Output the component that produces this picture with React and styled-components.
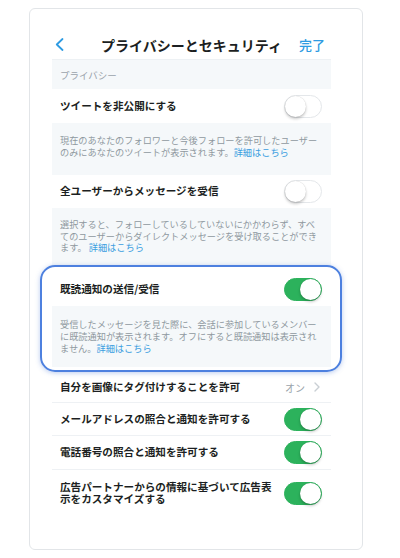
import React from "react";
import styled, { createGlobalStyle } from "styled-components";

const Global = createGlobalStyle`
  html, body { margin: 0; padding: 0; background: #ffffff; }
  body { font-family: "Noto Sans CJK JP", "Noto Sans", sans-serif; }
  * { box-sizing: border-box; }
`;

const Card = styled.div`
  margin: 8px 0 0 29px;
  width: 334px;
  height: 542px;
  border: 1px solid #e2e5e8;
  border-radius: 6px;
  padding: 21px 31px 0 22px;
  background: #fff;
`;

const Header = styled.div`
  display: grid;
  grid-template-columns: 40px 1fr 40px;
  align-items: center;
  height: 29px;
`;

const Back = styled.button`
  border: 0;
  background: none;
  padding: 0 0 0 3px;
  display: flex;
  align-items: center;
  height: 14px;
`;

const Title = styled.div`
  text-align: center;
  font-size: 14px;
  font-weight: 700;
  color: #1c1f22;
  letter-spacing: 0;
`;

const Done = styled.div`
  text-align: right;
  padding-right: 6px;
  font-size: 13px;
  font-weight: 500;
  color: #2d9be2;
`;

const SectionHead = styled.div`
  height: 30px;
  background: #f5f8fa;
  display: flex;
  align-items: center;
  padding-left: 8px;
  font-size: 9.5px;
  color: #9aa3ab;
  border-top: 1px solid #edf1f4;
`;

const Row = styled.div`
  display: flex;
  align-items: center;
  justify-content: space-between;
  height: ${(p) => p.$h}px;
  padding: ${(p) => p.$pt || 0}px 9px 0 8px;
  background: #fff;
  border-bottom: ${(p) => (p.$line ? "1px solid #eef1f4" : "0")};
`;

const Label = styled.div`
  font-size: 10.6px;
  font-weight: 700;
  color: #1c1f22;
  line-height: 12.5px;
`;

const Desc = styled.div`
  background: #f5f8fa;
  padding: ${(p) => p.$pt}px 8px ${(p) => p.$pb}px 8px;
  font-size: 9.2px;
  line-height: ${(p) => p.$lh}px;
  color: #8f989f;
  white-space: nowrap;
`;

const Link = styled.span`
  color: #3a9de0;
`;

const Group = styled.div`
  position: relative;
  margin-bottom: 5px;
  &::after {
    content: "";
    position: absolute;
    top: -1px;
    bottom: -5px;
    left: -12px;
    right: -11px;
    border: 2.5px solid #4d80df;
    border-radius: 15px;
    box-shadow: 0 1px 5px rgba(60, 110, 210, 0.35);
    pointer-events: none;
  }
`;

const Toggle = styled.span`
  position: relative;
  flex: none;
  width: 38px;
  height: 23px;
  border-radius: 12px;
  background: ${(p) => (p.$on ? "#2cb25c" : "#ffffff")};
  border: 1px solid ${(p) => (p.$on ? "#2cb25c" : "#e4e7ea")};
`;

const Knob = styled.span`
  position: absolute;
  top: 0;
  left: ${(p) => (p.$on ? "15px" : "0")};
  width: 21px;
  height: 21px;
  border-radius: 50%;
  background: #fff;
  box-shadow: 0 2px 3px rgba(0, 0, 0, 0.22), 0 0 1px rgba(0, 0, 0, 0.2);
`;

const Value = styled.div`
  display: flex;
  align-items: center;
  gap: 9px;
  font-size: 10px;
  color: #9aa3ab;
  padding-right: 2px;
`;

const Switch = ({ on }) => (
  <Toggle $on={on}>
    <Knob $on={on} />
  </Toggle>
);

export default function App() {
  return (
    <>
      <Global />
      <Card>
        <Header>
          <Back aria-label="戻る">
            <svg width="9" height="13" viewBox="0 0 9 13">
              <polyline points="7.5,1 1.8,6.5 7.5,12" fill="none" stroke="#2d9be2" strokeWidth="1.8" strokeLinecap="round" strokeLinejoin="round" />
            </svg>
          </Back>
          <Title>プライバシーとセキュリティ</Title>
          <Done>完了</Done>
        </Header>

        <SectionHead>プライバシー</SectionHead>

        <Row $h={34}>
          <Label>ツイートを非公開にする</Label>
          <Switch on={false} />
        </Row>
        <Desc $pt={11} $pb={17} $lh={12}>
          現在のあなたのフォロワーと今後フォローを許可したユーザー
          <br />
          のみにあなたのツイートが表示されます。<Link>詳細はこちら</Link>
        </Desc>

        <Row $h={33}>
          <Label>全ユーザーからメッセージを受信</Label>
          <Switch on={false} />
        </Row>
        <Desc $pt={11} $pb={12} $lh={11.7}>
          選択すると、フォローしているしていないにかかわらず、すべ
          <br />
          てのユーザーからダイレクトメッセージを受け取ることができ
          <br />
          ます。 <Link>詳細はこちら</Link>
        </Desc>

        <Group>
          <Row $h={40} $pt={6}>
            <Label>既読通知の送信/受信</Label>
            <Switch on />
          </Row>
          <Desc $pt={13} $pb={13} $lh={11.7}>
            受信したメッセージを見た際に、会話に参加しているメンバー
            <br />
            に既読通知が表示されます。オフにすると既読通知は表示され
            <br />
            ません。<Link>詳細はこちら</Link>
          </Desc>
        </Group>

        <Row $h={31} $line>
          <Label>自分を画像にタグ付けすることを許可</Label>
          <Value>
            オン
            <svg width="6" height="10" viewBox="0 0 6 10">
              <polyline points="1,1 5,5 1,9" fill="none" stroke="#c9cfd4" strokeWidth="1.4" strokeLinecap="round" strokeLinejoin="round" />
            </svg>
          </Value>
        </Row>
        <Row $h={33} $line>
          <Label>メールアドレスの照合と通知を許可する</Label>
          <Switch on />
        </Row>
        <Row $h={34} $line>
          <Label>電話番号の照合と通知を許可する</Label>
          <Switch on />
        </Row>
        <Row $h={46}>
          <Label>
            広告パートナーからの情報に基づいて広告表
            <br />
            示をカスタマイズする
          </Label>
          <Switch on />
        </Row>
      </Card>
    </>
  );
}
